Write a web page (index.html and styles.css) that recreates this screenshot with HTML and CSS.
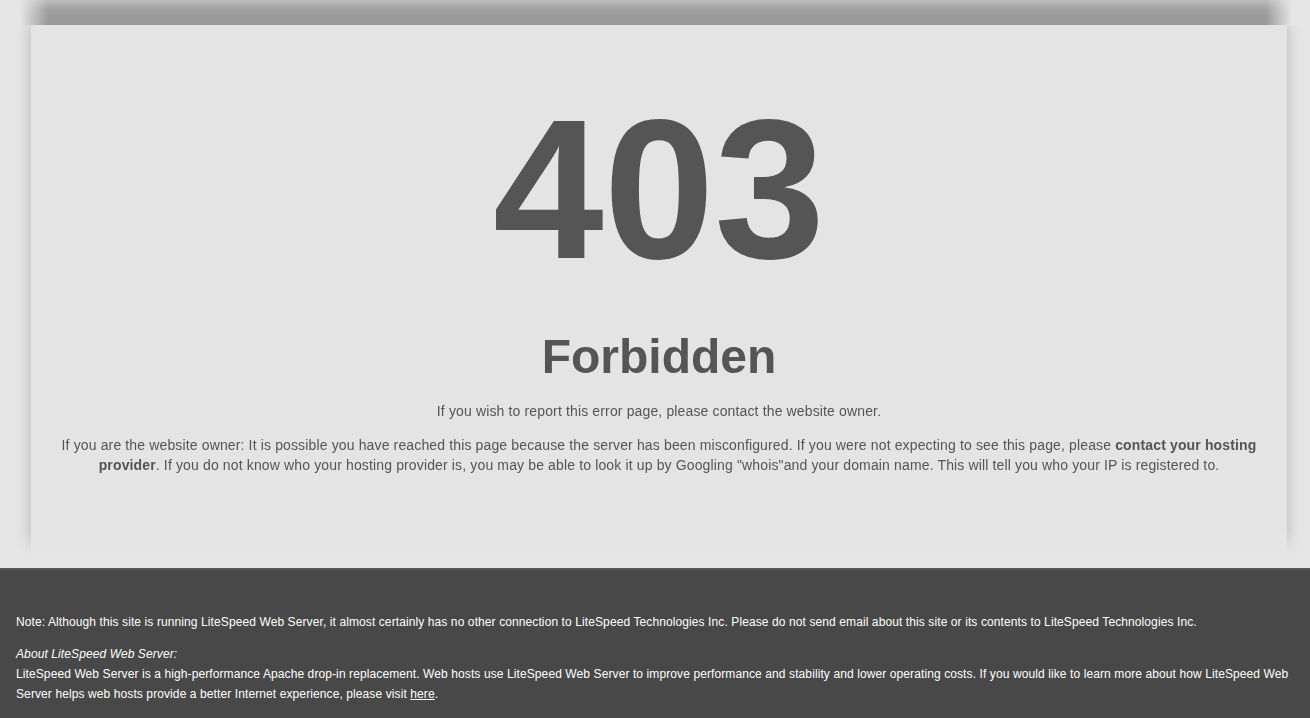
FILE: index.html
```html
<!DOCTYPE html>
<html lang="en">
<head>
<meta charset="utf-8">
<title>403 Forbidden</title>
<link rel="stylesheet" href="styles.css">
</head>
<body>
<div class="topshade"></div>
<div class="wrap">
  <div class="container">
    <h1 class="code">403</h1>
    <h2 class="title">Forbidden</h2>
    <p class="msg">If you wish to report this error page, please contact the website owner.</p>
    <p class="msg msg-gap">If you are the website owner: It is possible you have reached this page because the server has been misconfigured. If you were not expecting to see this page, please <b>contact your hosting provider</b>. If you do not know who your hosting provider is, you may be able to look it up by Googling "whois"and your domain name. This will tell you who your IP is registered to.</p>
  </div>
</div>
<div class="footer">
  <p class="note">Note: Although this site is running LiteSpeed Web Server, it almost certainly has no other connection to LiteSpeed Technologies Inc. Please do not send email about this site or its contents to LiteSpeed Technologies Inc.</p>
  <p class="about"><i>About LiteSpeed Web Server:</i><br>LiteSpeed Web Server is a high-performance Apache drop-in replacement. Web hosts use LiteSpeed Web Server to improve performance and stability and lower operating costs. If you would like to learn more about how LiteSpeed Web Server helps web hosts provide a better Internet experience, please visit <a href="#">here</a>.</p>
</div>
</body>
</html>
```

FILE: styles.css
```css
html, body {
  margin: 0;
  padding: 0;
}
body {
  background: #e6e6e6;
  font-family: "Liberation Sans", Arial, Helvetica, sans-serif;
  color: #555555;
}
.topshade {
  height: 25px;
  margin: 0 18px 0 20px;
  background: linear-gradient(to bottom, #bcbcbc 0, #a2a2a2 9px, #999999 18px, #999999 100%);
  -webkit-mask-image: linear-gradient(to right, transparent 0, #000 28px, #000 calc(100% - 26px), transparent 100%);
  mask-image: linear-gradient(to right, transparent 0, #000 28px, #000 calc(100% - 26px), transparent 100%);
}
.wrap {
  padding: 0 8px 0 16px;
  -webkit-mask-image: linear-gradient(to bottom, #000 0, #000 505px, transparent 532px);
  mask-image: linear-gradient(to bottom, #000 0, #000 505px, transparent 532px);
  height: 543px;
}
.container {
  margin: 0 15px 0 15px;
  height: 532px;
  box-sizing: border-box;
  padding: 64px 30px 0;
  background: #e4e4e4;
  box-shadow: 0 0 14px rgba(0, 0, 0, 0.22);
  text-align: center;
}
.code {
  margin: 0;
  font-size: 199px;
  line-height: 200px;
  font-weight: bold;
  color: #555555;
}
.title {
  margin: 40px 0 0;
  font-size: 48px;
  line-height: 56px;
  font-weight: bold;
  color: #555555;
}
.msg {
  margin: 16px 0 0;
  font-size: 14px;
  line-height: 20px;
  letter-spacing: 0.14px;
}
.msg-gap {
  margin-top: 14px;
}
.msg b {
  font-weight: bold;
}
.footer {
  background: #484848;
  border-top: 2px solid #575757;
  padding: 42px 16px 20px;
  color: #ffffff;
  font-size: 12px;
  line-height: 20px;
  letter-spacing: 0.1px;
}
.footer p {
  margin: 0;
}
.footer .about {
  margin-top: 12px;
}
.footer a {
  color: #ffffff;
  text-decoration: underline;
}
```
